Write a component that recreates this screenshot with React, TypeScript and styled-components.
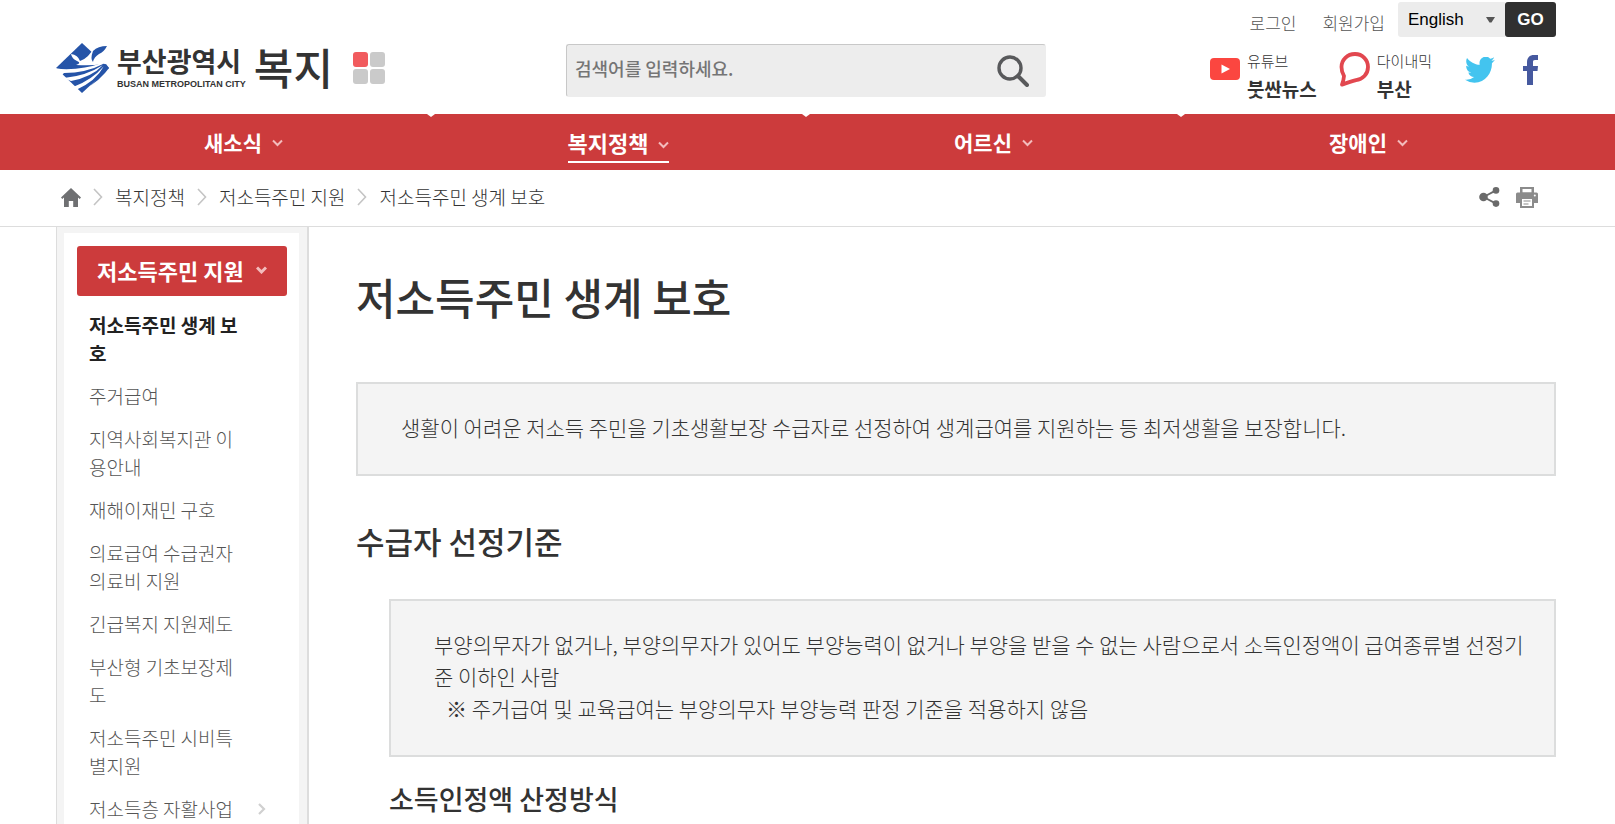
import React from 'react';
import styled, { createGlobalStyle, css } from 'styled-components';

const RED = '#cc3b3c';

const Global = createGlobalStyle`
  *, *::before, *::after { box-sizing: border-box; }
  html, body { margin: 0; padding: 0; }
  body {
    background: #fff;
    color: #333;
    font-family: "Noto Sans CJK KR", "Noto Sans", sans-serif;
    font-weight: 300;
  }
  a { color: inherit; text-decoration: none; }
  button { cursor: pointer; }
  ul, ol { list-style: none; margin: 0; padding: 0; }
  h1, h2, h3, p { margin: 0; }
  svg { display: block; flex: none; }
`;

const gutter = css`
  padding-left: 56px;
  padding-right: 59px;
`;

const Header = styled.header`
  ${gutter}
  display: grid;
  grid-template-columns: 1fr 480px 1fr;
  height: 114px;
`;

const Brand = styled.div`
  display: flex;
  align-items: center;
  height: 50px;
  margin-top: 43px;
`;

const CityLink = styled.a`
  display: flex;
  align-items: center;
  gap: 7px;
`;

const CityName = styled.span`
  display: flex;
  flex-direction: column;
  gap: 2px;
  font-weight: 700;
  white-space: nowrap;
`;

const CityKorean = styled.span`
  font-size: 27px;
  line-height: 30px;
`;

const CityEnglish = styled.span`
  font-family: "Liberation Sans Narrow", "Liberation Sans", sans-serif;
  font-size: 9px;
  line-height: 12px;
`;

const SiteLink = styled.a`
  margin-left: 8px;
  padding-bottom: 4px;
  font-size: 43px;
  line-height: 50px;
  font-weight: 500;
`;

const SiteMenuButton = styled.button`
  display: grid;
  grid-template-columns: 15px 15px;
  gap: 2px;
  margin-left: 20px;
  padding: 0;
  border: 0;
  background: none;
`;

const Tile = styled.span<{ $active?: boolean }>`
  height: 15px;
  border-radius: 3px;
  background: ${(p) => (p.$active ? '#f15b5e' : '#cacaca')};
`;

const SearchForm = styled.form`
  display: flex;
  align-items: center;
  height: 53px;
  margin-top: 44px;
  border: 1px solid #ededed;
  border-top-color: #c8c8c8;
  border-left-color: #c8c8c8;
  border-radius: 3px;
  background: #ededed;
`;

const SearchInput = styled.input`
  flex: 1;
  min-width: 0;
  height: 48px;
  padding: 0 8px 6px;
  border: 0;
  background: none;
  font: 500 18px/24px "Noto Sans CJK KR", sans-serif;
  &::placeholder { color: #757575; opacity: 1; }
`;

const SearchButton = styled.button`
  margin-right: 16px;
  padding: 0;
  border: 0;
  background: none;
`;

const Side = styled.div`
  display: flex;
  flex-direction: column;
  align-items: flex-end;
`;

const Utility = styled.div`
  display: flex;
  align-items: center;
  height: 35px;
  margin-top: 2px;
`;

const UtilityLink = styled.a`
  margin-right: 26px;
  padding-top: 7px;
  font-size: 17px;
  line-height: 24px;
  color: #555;
  &:last-of-type { margin-right: 13px; }
`;

const LanguageForm = styled.form`
  display: flex;
`;

const SelectWrap = styled.span`
  display: flex;
  align-items: center;
  width: 107px;
  height: 35px;
  padding-right: 10px;
  border-radius: 3px 0 0 3px;
  background: #ececec;
`;

const LanguageSelect = styled.select`
  flex: 1;
  min-width: 0;
  height: 35px;
  padding: 0 0 0 10px;
  border: 0;
  appearance: none;
  background: none;
  color: #000;
  font: 400 17px "Liberation Sans", Arial, sans-serif;
`;

const GoButton = styled.button`
  width: 51px;
  height: 35px;
  padding: 0;
  border: 0;
  border-radius: 3px;
  background: #303030;
  color: #fff;
  font: 700 17px "Liberation Sans", Arial, sans-serif;
`;

const Socials = styled.div`
  display: flex;
  align-items: flex-start;
  margin-top: 12px;
  padding-right: 18px;
`;

const SocialLink = styled.a<{ $gap?: number; $iconTop: number }>`
  display: flex;
  gap: 7px;
  margin-left: ${(p) => p.$gap ?? 0}px;
  svg { margin-top: ${(p) => p.$iconTop}px; }
`;

const SocialText = styled.span`
  display: flex;
  flex-direction: column;
  font-size: 15px;
  line-height: 24px;
  white-space: nowrap;
  strong {
    font-size: 19px;
    line-height: 32px;
    font-weight: 700;
  }
`;

const Nav = styled.nav`
  ${gutter}
  background: ${RED};
`;

const NavList = styled.ul`
  display: grid;
  grid-template-columns: repeat(4, 1fr);
`;

const NavItem = styled.li`
  position: relative;
  display: flex;
  align-items: center;
  justify-content: center;
  height: 56px;
  & + &::before {
    content: "";
    position: absolute;
    left: -4px;
    top: 0;
    border: 4px solid transparent;
    border-top: 3px solid #fff;
    border-bottom: 0;
  }
`;

const NavLink = styled.a<{ $active?: boolean }>`
  display: flex;
  align-items: center;
  gap: 10px;
  color: #fff;
  font-size: ${(p) => (p.$active ? 22 : 21)}px;
  line-height: 32px;
  font-weight: 700;
  svg { margin-top: 2px; }
  ${(p) => p.$active && css`
    margin-top: 6px;
    padding-bottom: 4px;
    border-bottom: 2px solid #fff;
    line-height: 30px;
    svg { margin-top: 5px; }
  `}
`;

const PathBar = styled.div`
  ${gutter}
  display: flex;
  align-items: center;
  justify-content: space-between;
  height: 57px;
  padding-bottom: 2px;
  border-bottom: 1px solid #ddd;
`;

const Crumbs = styled.ol`
  display: flex;
  align-items: center;
  padding-left: 5px;
  font-size: 19px;
  line-height: 28px;
  li { display: flex; align-items: center; }
`;

const CrumbChevron = styled.svg`
  margin: 0 12px;
`;

const PageTools = styled.div`
  display: flex;
  align-items: center;
  gap: 16px;
  padding-right: 18px;
`;

const ToolButton = styled.button`
  padding: 0;
  border: 0;
  background: none;
`;

const Body = styled.div`
  ${gutter}
  display: flex;
  align-items: stretch;
`;

const Sidebar = styled.aside`
  flex: none;
  width: 253px;
  padding: 6px 8px 0 7px;
  border-left: 1px solid #ddd;
  border-right: 2px solid #ddd;
  background: #f4f4f4;
`;

const SidebarInner = styled.div`
  min-height: 100%;
  padding: 13px 12px 0 13px;
  background: #fff;
`;

const SectionButton = styled.button`
  display: flex;
  align-items: center;
  gap: 12px;
  width: 100%;
  height: 50px;
  padding: 0 20px 3px;
  border: 0;
  border-radius: 3px;
  background: ${RED};
  color: #fff;
  font: 700 22px/32px "Noto Sans CJK KR", sans-serif;
  white-space: nowrap;
`;

const SubMenu = styled.ul`
  padding: 8px 21px 0 12px;
`;

const SubItem = styled.li`
  display: flex;
  align-items: center;
  justify-content: space-between;
  padding: 7px 0 8px;
`;

const SubLink = styled.a<{ $active?: boolean }>`
  width: 155px;
  font-size: 19px;
  line-height: 28px;
  color: ${(p) => (p.$active ? '#222' : '#555')};
  font-weight: ${(p) => (p.$active ? 700 : 300)};
`;

const Main = styled.main`
  flex: 1;
  min-width: 0;
  padding-left: 47px;
`;

const Title = styled.h1`
  margin-top: 39px;
  font-size: 43px;
  line-height: 60px;
  font-weight: 500;
`;

const Notice = styled.div`
  border: 2px solid #dcdddd;
  background: #f4f4f4;
  padding: 27px 28px 31px 43px;
  font-size: 21px;
  line-height: 32px;
`;

const Lead = styled(Notice)`
  margin-top: 56px;
`;

const Heading = styled.h2`
  margin-top: 42px;
  font-size: 31px;
  line-height: 46px;
  font-weight: 500;
`;

const Section = styled.section`
  padding-left: 33px;
`;

const Criteria = styled(Notice)`
  margin-top: 35px;
`;

const Remark = styled.p`
  padding-left: 12px;
`;

const SubHeading = styled.h3`
  margin-top: 22px;
  font-size: 27px;
  line-height: 40px;
  font-weight: 500;
`;

const Emblem = () => (
  <svg width="54" height="51" viewBox="0 0 54 51" aria-hidden="true">
    <path d="M26 0 53 25 26 50 0 25Z" fill="#2554a8" />
    <path d="M15 11Q22 12 24 18Q33 15 38 4L54 0V20L46 21Q36 23 20 22Q26 20 21 18Q16 16 15 11Z" fill="#fff" />
    <path d="M37 8Q42 3 51 3Q48 9 43 11Q38 14 37 19Q34 16 37 8Z" fill="#2554a8" />
    <path d="M-1 25 5 26Q27 27 46 20L47 21Q30 30 8 30L5 33Z" fill="#fff" />
    <path d="M8 35Q30 33 47 22Q36 34 15 38Z" fill="#fff" />
    <path d="M17 44Q36 37 48 23Q40 38 20 47Z" fill="#fff" />
    <path d="M27 52Q44 38 50 25L56 30Z" fill="#fff" />
    <path d="M46 22 50 21 53 25 49 30Q42 38 34 43Q43 34 48 24Z" fill="#2554a8" />
  </svg>
);

const SearchIcon = () => (
  <svg width="32" height="32" viewBox="0 0 32 32" fill="none" stroke="#58595b" aria-hidden="true">
    <circle cx="13" cy="13" r="11" strokeWidth="3.4" />
    <path d="m21 21 9 9" strokeWidth="4" strokeLinecap="round" />
  </svg>
);

const YoutubeIcon = () => (
  <svg width="30" height="22" viewBox="0 0 30 22" aria-hidden="true">
    <rect width="30" height="22" rx="4" fill="#fb4640" />
    <path d="M11.500 6.500 20 11l-8.500 4.500Z" fill="#fff" />
  </svg>
);

const BubbleIcon = () => (
  <svg width="31" height="35" viewBox="0 0 31 35" fill="none" stroke="#e2474f" strokeWidth="3.8" strokeLinejoin="round" aria-hidden="true">
    <path d="M16 2C23.500 2 29 7.800 29 15S23.500 27.500 17 28.200Q12 29.500 3 32.600Q4.800 27.500 5 24Q2.500 20 2.500 15C2.500 7.800 8.200 2 16 2Z" />
  </svg>
);

const TwitterIcon = () => (
  <svg width="30" height="26" viewBox="0 2.500 24 19.500" preserveAspectRatio="none" aria-hidden="true">
    <path fill="#43c4ef" d="M23.950 4.570a10 10 0 0 1-2.820.780 4.960 4.960 0 0 0 2.160-2.720c-.950.550-2 .950-3.130 1.180a4.920 4.920 0 0 0-8.380 4.480C7.690 8.090 4.070 6.130 1.640 3.160a4.820 4.820 0 0 0-.670 2.470c0 1.710.870 3.210 2.190 4.100a4.900 4.900 0 0 1-2.230-.620v.060a4.920 4.920 0 0 0 3.950 4.830 5 5 0 0 1-2.210.080 4.940 4.940 0 0 0 4.600 3.420A9.870 9.870 0 0 1 0 19.540a13.990 13.990 0 0 0 7.550 2.210c9.050 0 14-7.500 14-13.980 0-.210 0-.420-.020-.630a9.940 9.940 0 0 0 2.460-2.550z" />
  </svg>
);

const FacebookIcon = () => (
  <svg width="15" height="30" viewBox="0 0 15 30" aria-hidden="true">
    <path fill="#46599f" d="M4 30V16H0v-5h4V7.500C4 2.600 6.600 0 11 0h4v5h-3C10.400 5 10 5.800 10 7.200V11h5l-.5 5H10v14Z" />
  </svg>
);

const HomeIcon = () => (
  <svg width="20" height="19" viewBox="0 0 20 19" aria-hidden="true">
    <path fill="#6f7072" d="M10 0 20 9.500 18.700 11 17 9.600V19h-4.800v-6H7.800v6H3V9.600L1.300 11 0 9.500Z" />
  </svg>
);

const ShareIcon = () => (
  <svg width="21" height="20" viewBox="0 0 21 20" aria-hidden="true">
    <path d="M4.500 10 17 3.400M4.500 10 17 16.600" stroke="#6a6a6a" strokeWidth="1.800" />
    <circle cx="4.500" cy="10" r="4.300" fill="#6a6a6a" />
    <circle cx="17" cy="3.400" r="3.300" fill="#6a6a6a" />
    <circle cx="17" cy="16.600" r="3.300" fill="#6a6a6a" />
  </svg>
);

const PrintIcon = () => (
  <svg width="22" height="21" viewBox="0 0 22 21" aria-hidden="true">
    <path d="M4 0h14v7H4Z" fill="#8b8b8b" />
    <path d="M6.500 2h9v3.500h-9Z" fill="#fff" />
    <path d="M1.500 5.500h19a1.500 1.500 0 0 1 1.500 1.500v9H0V7a1.500 1.500 0 0 1 1.500-1.500Z" fill="#8b8b8b" />
    <path d="M4 11h14v10H4Z" fill="#8b8b8b" />
    <path d="M6 12h10v7H6Z" fill="#fff" />
    <path d="M7.500 14h7M7.500 17h5" stroke="#8b8b8b" strokeWidth="1.200" />
    <circle cx="18.800" cy="8.500" r="1" fill="#fff" />
  </svg>
);

const ChevronDown = ({ width = 2 }: { width?: number }) => (
  <svg width="11" height="8" viewBox="0 0 11 8" fill="none" stroke="#f3bcbc" strokeWidth={width} aria-hidden="true">
    <path d="M1 1.500 5.500 6 10 1.500" />
  </svg>
);

const CrumbSeparator = () => (
  <CrumbChevron width="10" height="18" viewBox="0 0 10 18" fill="none" stroke="#c4c4c4" strokeWidth="1.600" aria-hidden="true">
    <path d="M1 1 8.500 9 1 17" />
  </CrumbChevron>
);

const MoreIcon = () => (
  <svg width="8" height="12" viewBox="0 0 8 12" fill="none" stroke="#d0d0d0" strokeWidth="2.200" aria-hidden="true">
    <path d="M1 1 6 6 1 11" />
  </svg>
);

const CaretIcon = () => (
  <svg width="9" height="6" viewBox="0 0 9 6" aria-hidden="true">
    <path d="M0 0h9L5.500 5.500h-2Z" fill="#555" />
  </svg>
);

const navItems: { label: string; active?: boolean }[] = [
  { label: '새소식' },
  { label: '복지정책', active: true },
  { label: '어르신' },
  { label: '장애인' },
];

const crumbs = ['복지정책', '저소득주민 지원', '저소득주민 생계 보호'];

const subItems: { label: string; active?: boolean; more?: boolean }[] = [
  { label: '저소득주민 생계 보호', active: true },
  { label: '주거급여' },
  { label: '지역사회복지관 이용안내' },
  { label: '재해이재민 구호' },
  { label: '의료급여 수급권자 의료비 지원' },
  { label: '긴급복지 지원제도' },
  { label: '부산형 기초보장제도' },
  { label: '저소득주민 시비특별지원' },
  { label: '저소득층 자활사업', more: true },
];

export default function App() {
  return (
    <>
      <Global />
      <Header>
        <Brand>
          <CityLink href="#city">
            <Emblem />
            <CityName>
              <CityKorean>부산광역시</CityKorean>
              <CityEnglish>BUSAN METROPOLITAN CITY</CityEnglish>
            </CityName>
          </CityLink>
          <SiteLink href="#home">복지</SiteLink>
          <SiteMenuButton type="button" aria-label="분야별 누리집">
            <Tile $active />
            <Tile />
            <Tile />
            <Tile />
          </SiteMenuButton>
        </Brand>
        <SearchForm role="search">
          <SearchInput type="text" aria-label="검색어" placeholder="검색어를 입력하세요." />
          <SearchButton type="submit" aria-label="검색">
            <SearchIcon />
          </SearchButton>
        </SearchForm>
        <Side>
          <Utility>
            <UtilityLink href="#login">로그인</UtilityLink>
            <UtilityLink href="#join">회원가입</UtilityLink>
            <LanguageForm>
              <SelectWrap>
                <LanguageSelect aria-label="Language" defaultValue="English">
                  <option>English</option>
                </LanguageSelect>
                <CaretIcon />
              </SelectWrap>
              <GoButton type="submit">GO</GoButton>
            </LanguageForm>
          </Utility>
          <Socials>
            <SocialLink href="#youtube" $iconTop={9}>
              <YoutubeIcon />
              <SocialText>
                유튜브<strong>붓싼뉴스</strong>
              </SocialText>
            </SocialLink>
            <SocialLink href="#dynamic" $gap={22} $iconTop={3}>
              <BubbleIcon />
              <SocialText>
                다이내믹<strong>부산</strong>
              </SocialText>
            </SocialLink>
            <SocialLink href="#twitter" $gap={33} $iconTop={8} aria-label="트위터">
              <TwitterIcon />
            </SocialLink>
            <SocialLink href="#facebook" $gap={28} $iconTop={6} aria-label="페이스북">
              <FacebookIcon />
            </SocialLink>
          </Socials>
        </Side>
      </Header>
      <Nav>
        <NavList>
          {navItems.map((item) => (
            <NavItem key={item.label}>
              <NavLink href="#menu" $active={item.active}>
                {item.label}
                <ChevronDown />
              </NavLink>
            </NavItem>
          ))}
        </NavList>
      </Nav>
      <PathBar>
        <Crumbs>
          <li>
            <a href="#home" aria-label="홈">
              <HomeIcon />
            </a>
          </li>
          {crumbs.map((crumb) => (
            <li key={crumb}>
              <CrumbSeparator />
              <a href="#crumb">{crumb}</a>
            </li>
          ))}
        </Crumbs>
        <PageTools>
          <ToolButton type="button" aria-label="공유">
            <ShareIcon />
          </ToolButton>
          <ToolButton type="button" aria-label="인쇄">
            <PrintIcon />
          </ToolButton>
        </PageTools>
      </PathBar>
      <Body>
        <Sidebar>
          <SidebarInner>
            <SectionButton type="button">
              저소득주민 지원
              <ChevronDown width={3} />
            </SectionButton>
            <SubMenu>
              {subItems.map((item) => (
                <SubItem key={item.label}>
                  <SubLink href="#sub" $active={item.active}>
                    {item.label}
                  </SubLink>
                  {item.more && <MoreIcon />}
                </SubItem>
              ))}
            </SubMenu>
          </SidebarInner>
        </Sidebar>
        <Main>
          <Title>저소득주민 생계 보호</Title>
          <Lead>
            생활이 어려운 저소득 주민을 기초생활보장 수급자로 선정하여 생계급여를 지원하는 등 최저생활을 보장합니다.
          </Lead>
          <Heading>수급자 선정기준</Heading>
          <Section>
            <Criteria>
              <p>
                부양의무자가 없거나, 부양의무자가 있어도 부양능력이 없거나 부양을 받을 수 없는 사람으로서 소득인정액이
                급여종류별 선정기준 이하인 사람
              </p>
              <Remark>※ 주거급여 및 교육급여는 부양의무자 부양능력 판정 기준을 적용하지 않음</Remark>
            </Criteria>
            <SubHeading>소득인정액 산정방식</SubHeading>
          </Section>
        </Main>
      </Body>
    </>
  );
}
